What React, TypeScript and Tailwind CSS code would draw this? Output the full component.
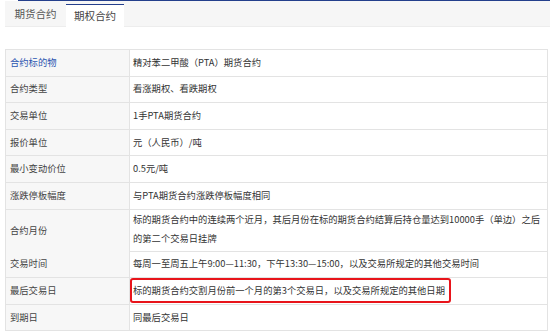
const rows: { label: string; value: string[]; tall?: boolean; hl?: boolean; blue?: boolean }[] = [
  { label: "合约标的物", value: ["精对苯二甲酸（PTA）期货合约"], blue: true },
  { label: "合约类型", value: ["看涨期权、看跌期权"] },
  { label: "交易单位", value: ["1手PTA期货合约"] },
  { label: "报价单位", value: ["元（人民币）/吨"] },
  { label: "最小变动价位", value: ["0.5元/吨"] },
  { label: "涨跌停板幅度", value: ["与PTA期货合约涨跌停板幅度相同"] },
  {
    label: "合约月份",
    value: [
      "标的期货合约中的连续两个近月，其后月份在标的期货合约结算后持仓量达到10000手（单边）之后",
      "的第二个交易日挂牌",
    ],
    tall: true,
  },
  { label: "交易时间", value: ["每周一至周五上午9:00—11:30，下午13:30—15:00，以及交易所规定的其他交易时间"] },
  { label: "最后交易日", value: ["标的期货合约交割月份前一个月的第3个交易日，以及交易所规定的其他日期"], hl: true },
  { label: "到期日", value: ["同最后交易日"] },
];

export default function App() {
  return (
    <div className="w-[550px] h-[332px] bg-white overflow-hidden font-['Noto_Sans_CJK_SC',sans-serif] text-[#333]">
      <div className="h-px ml-[18px] bg-[#243f8c]" />
      <div className="ml-[5px] h-[26px] bg-[#f6f6f6] border-b border-[#ededed] flex items-end">
        <div className="w-[61px] h-full flex items-center justify-center text-[10.5px] text-[#555]">
          期货合约
        </div>
        <div className="w-[58px] h-[23px] bg-white border-t border-[#243f8c] flex items-center justify-center text-[10.5px] text-[#444] -mb-px">
          期权合约
        </div>
      </div>
      <div className="h-[22px]" />
      <div className="ml-[5px] w-[543px] border-t border-l border-r border-[#e3e3e3]">
        {rows.map((r) => (
          <div
            key={r.label}
            className={`grid grid-cols-[124px_1fr] border-b border-[#e3e3e3] text-[9.3px] ${
              r.tall ? "h-[42px]" : "h-[26.6px]"
            }`}
          >
            <div
              className={`bg-[#f7f7f7] border-r border-[#e3e3e3] pl-[4px] flex items-center ${
                r.blue ? "text-[#2a55b0]" : "text-[#444]"
              }`}
            >
              {r.label}
            </div>
            <div className={`pl-[3px] flex flex-col justify-center ${r.tall ? "leading-[19px] pb-[4px]" : ""}`}>
              {r.hl ? (
                <div className="relative">
                  <span>{r.value[0]}</span>
                  <span className="absolute left-[-3px] top-[-6px] w-[321px] h-[25px] border-2 border-[#e8141b] rounded-[3px]" />
                </div>
              ) : (
                r.value.map((v) => <div key={v} className="whitespace-nowrap">{v}</div>)
              )}
            </div>
          </div>
        ))}
      </div>
    </div>
  );
}
